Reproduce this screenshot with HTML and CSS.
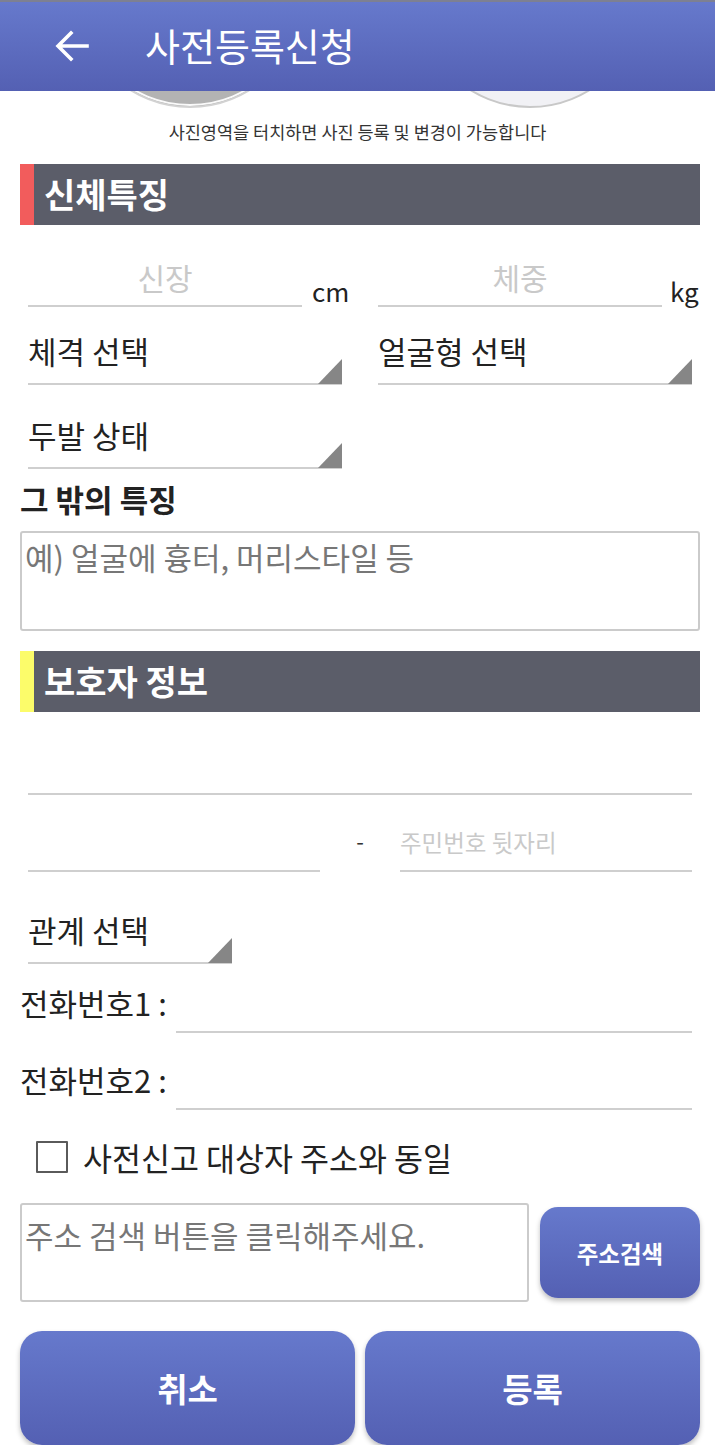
FILE: index.html
```html
<!DOCTYPE html>
<html>
<head>
    <title>사전등록신청</title>
    <link rel="stylesheet" href="styles.css">
</head>
<body>
    <header class="appbar">
        <svg class="back" width="36" height="34" viewBox="0 0 36 34">
            <path d="M33 17H5M17 4L4 17l13 13" fill="none" stroke="#fff" stroke-width="3.6" stroke-linecap="square"/>
        </svg>
        <h1 class="title">사전등록신청</h1>
    </header>

    <div class="photos">
        <div class="photo photo-main"></div>
        <div class="photo photo-sub"></div>
    </div>
    <p class="caption">사진영역을 터치하면 사진 등록 및 변경이 가능합니다</p>

    <main class="content">
        <h2 class="section-head red">신체특징</h2>

        <div class="measure-row">
            <input class="line-input center w274" type="text" placeholder="신장">
            <span class="unit">cm</span>
            <input class="line-input center w284 gap-29" type="text" placeholder="체중">
            <span class="unit unit-kg">kg</span>
        </div>

        <div class="select-row first">
            <div class="select w314">체격 선택</div>
            <div class="select w314">얼굴형 선택</div>
        </div>
        <div class="select-row second">
            <div class="select w314">두발 상태</div>
        </div>

        <h3 class="label-bold">그 밖의 특징</h3>
        <textarea class="box-input feature" placeholder="예) 얼굴에 흉터, 머리스타일 등"></textarea>

        <h2 class="section-head yellow">보호자 정보</h2>

        <div class="name-row">
            <input class="line-input full" type="text">
        </div>

        <div class="jumin-row">
            <input class="line-input w292" type="text">
            <span class="dash">-</span>
            <input class="line-input w292 small" type="text" placeholder="주민번호 뒷자리">
        </div>

        <div class="select-row relation">
            <div class="select w204">관계 선택</div>
        </div>

        <div class="phone-row first">
            <label class="phone-label">전화번호1 :</label>
            <input class="line-input phone" type="tel">
        </div>
        <div class="phone-row">
            <label class="phone-label">전화번호2 :</label>
            <input class="line-input phone" type="tel">
        </div>

        <label class="check-row">
            <input type="checkbox" class="check">
            <span>사전신고 대상자 주소와 동일</span>
        </label>

        <div class="address-row">
            <textarea class="box-input address" placeholder="주소 검색 버튼을 클릭해주세요."></textarea>
            <button class="btn btn-search" type="button">주소검색</button>
        </div>

        <div class="action-row">
            <button class="btn btn-big" type="button">취소</button>
            <button class="btn btn-big" type="button">등록</button>
        </div>
    </main>
</body>
</html>
```

FILE: styles.css
```css
body {
    margin: 0;
    background: #fff;
    font-family: "Noto Sans CJK KR", "Noto Sans", sans-serif;
    color: #222;
}
input, textarea, button {
    font-family: "Noto Sans CJK KR", "Noto Sans", sans-serif;
}

/* app bar */
.appbar {
    height: 89px;
    border-top: 2px solid #7d8092;
    background: linear-gradient(#6679cc, #5460b3);
    display: flex;
    align-items: center;
    position: relative;
    z-index: 2;
}
.back {
    margin-left: 54px;
    margin-top: -2px;
}
.title {
    margin: 0 0 0 55px;
    color: #fff;
    font-size: 38px;
    font-weight: 400;
    line-height: 44px;
    margin-top: -4px;
}

/* photo area (scrolled under the bar) */
.photos {
    height: 17px;
    overflow: hidden;
    display: flex;
    gap: 112px;
    padding-left: 76px;
}
.photo {
    flex-shrink: 0;
    width: 224px;
    height: 224px;
    margin-top: -211px;
    border-radius: 50%;
    border: 2px solid #d2d2d2;
}
.photo-main {
    background: #b3b3b3;
    box-shadow: inset 0 0 0 2px #fafafa;
}
.photo-sub {
    background: #f1f1f5;
    border-color: #c8c8c8;
}
.caption {
    margin: 12px 0 0;
    height: 24px;
    line-height: 24px;
    font-size: 17.5px;
    color: #333;
    text-align: center;
}

.content {
    padding: 0 15px 0 20px;
}

/* section headers */
.section-head {
    margin: 20px 0 0;
    height: 61px;
    line-height: 60px;
    background: #5b5d69;
    color: #fff;
    font-size: 34px;
    font-weight: 700;
    padding-left: 10px;
    border-left: 14px solid #f25c5c;
}
.section-head.yellow {
    border-left-color: #fcfc6a;
}

/* underlined inputs */
.line-input {
    box-sizing: border-box;
    height: 62px;
    padding: 4px 0 0;
    border: none;
    border-bottom: 2px solid #cfcfcf;
    background: transparent;
    font-size: 31px;
    color: #222;
    outline: none;
}
.line-input::placeholder {
    color: #c9c9c9;
}
.line-input.center {
    text-align: center;
    font-size: 30px;
}
.line-input.small {
    font-size: 23.5px;
}
.w274 { width: 274px; }
.w284 { width: 284px; }
.w292 { width: 292px; }
.w314 { width: 314px; }
.w204 { width: 204px; }
.gap-29 { margin-left: 29px; }

.measure-row {
    margin-top: 20px;
    padding-left: 8px;
    display: flex;
    align-items: flex-end;
}
.unit {
    width: 37px;
    margin-left: 10px;
    font-size: 26px;
    line-height: 30px;
    padding-bottom: 1px;
    color: #222;
}
.unit-kg {
    margin-left: 8px;
}

/* dropdowns */
.select-row {
    padding-left: 8px;
    display: flex;
    gap: 36px;
}
.select-row.first { margin-top: 26px; }
.select-row.second { margin-top: 32px; }
.select-row.relation { margin-top: 40px; }
.select {
    position: relative;
    box-sizing: border-box;
    height: 52px;
    border-bottom: 2px solid #cfcfcf;
    font-size: 31px;
    line-height: 36px;
    color: #222;
}
.select::after {
    content: "";
    position: absolute;
    right: 0;
    bottom: -1px;
    width: 0;
    height: 0;
    border-left: 24px solid transparent;
    border-bottom: 25px solid #868686;
}

.label-bold {
    margin: 13px 0 0;
    font-size: 31px;
    line-height: 34px;
    font-weight: 700;
    color: #222;
}

/* boxed text areas */
.box-input {
    display: block;
    box-sizing: border-box;
    border: 2px solid #cbcbcb;
    border-radius: 3px;
    padding: 6px 3px;
    font-size: 31px;
    line-height: 36px;
    resize: none;
    outline: none;
    color: #222;
}
.box-input::placeholder {
    color: #777;
}
.feature {
    margin-top: 15px;
    width: 680px;
    height: 100px;
}

.name-row {
    margin-top: 21px;
    padding-left: 8px;
}
.line-input.full {
    width: 664px;
}

.jumin-row {
    margin-top: 15px;
    padding-left: 8px;
    display: flex;
    align-items: center;
}
.dash {
    width: 80px;
    text-align: center;
    font-size: 22px;
    color: #333;
    margin-top: -2px;
}

.phone-row {
    margin-top: 21px;
    display: flex;
    align-items: flex-start;
}
.phone-row.first {
    margin-top: 13px;
}
.phone-label {
    width: 156px;
    font-size: 31px;
    line-height: 52px;
    color: #222;
    white-space: nowrap;
}
.line-input.phone {
    width: 516px;
    height: 56px;
}

.check-row {
    margin-top: 27px;
    height: 40px;
    display: flex;
    align-items: center;
    padding-left: 16px;
    font-size: 31.5px;
    color: #222;
}
.check {
    appearance: none;
    margin: 0 15px 0 0;
    width: 32px;
    height: 32px;
    border: 2px solid #5a5a5a;
    border-radius: 1px;
    background: #fff;
}

.address-row {
    margin-top: 26px;
    display: flex;
    gap: 11px;
    align-items: flex-start;
}
.address {
    width: 509px;
    height: 99px;
    padding-top: 12px;
}

/* buttons */
.btn {
    border: none;
    color: #fff;
    font-weight: 700;
    background: linear-gradient(#6679cc, #5460b3);
    box-shadow: 0 3px 5px rgba(0, 0, 0, 0.25);
}
.btn-search {
    margin-top: 4px;
    width: 160px;
    height: 91px;
    border-radius: 18px;
    font-size: 23.5px;
}
.action-row {
    margin-top: 29px;
    display: flex;
    gap: 10px;
}
.btn-big {
    width: 335px;
    height: 114px;
    border-radius: 22px;
    font-size: 33px;
}
```
